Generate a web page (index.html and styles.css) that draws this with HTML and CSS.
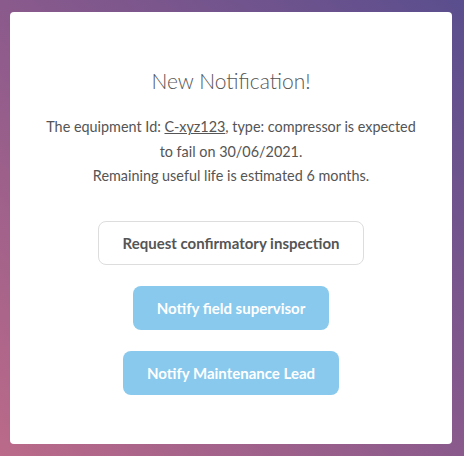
FILE: index.html
```html
<!DOCTYPE html>
<html>
<head>
<meta charset="utf-8">
<link rel="stylesheet" href="styles.css">
</head>
<body>
<div class="page">
  <div class="card">
    <h1 class="title">New Notification!</h1>
    <p class="message">The equipment Id: <a class="eq-link" href="#">C-xyz123</a>, type: compressor is expected<br>to fail on 30/06/2021.<br>Remaining useful life is estimated 6 months.</p>
    <div class="actions">
      <button class="btn btn-outline">Request confirmatory inspection</button>
      <button class="btn btn-primary btn-supervisor">Notify field supervisor</button>
      <button class="btn btn-primary btn-lead">Notify Maintenance Lead</button>
    </div>
  </div>
</div>
</body>
</html>
```

FILE: styles.css
```css
html, body {
  margin: 0;
  padding: 0;
  height: 100%;
}
body {
  font-family: Lato, "Noto Sans", sans-serif;
  color: #555;
}
.page {
  box-sizing: border-box;
  height: 456px;
  width: 464px;
  padding: 12px 12px 12px 10px;
  background: linear-gradient(to top right, #bb6a89 0%, #8a5a8c 50%, #5a4e8e 100%);
  display: flex;
}
.card {
  flex: 1;
  background: #fff;
  border-radius: 4px;
  display: flex;
  flex-direction: column;
  align-items: center;
  padding-top: 54px;
}
.title {
  margin: 0;
  font-weight: 300;
  font-size: 21px;
  line-height: 30px;
  color: #555;
}
.message {
  margin: 19px 0 0;
  text-align: center;
  font-size: 14.4px;
  line-height: 24.5px;
  color: #555;
}
.eq-link {
  color: #555;
  text-decoration: underline;
}
.actions {
  margin-top: 32px;
  display: flex;
  flex-direction: column;
  align-items: center;
  gap: 21px;
}
.btn {
  font-family: Lato, "Noto Sans", sans-serif;
  font-size: 15px;
  font-weight: 700;
  height: 44px;
  border-radius: 8px;
  padding: 0 24px;
  cursor: pointer;
}
.btn-outline {
  background: #fff;
  border: 1px solid #ddd;
  color: #555;
}
.btn-primary {
  background: #88c9ed;
  border: none;
  color: #fff;
}
```
